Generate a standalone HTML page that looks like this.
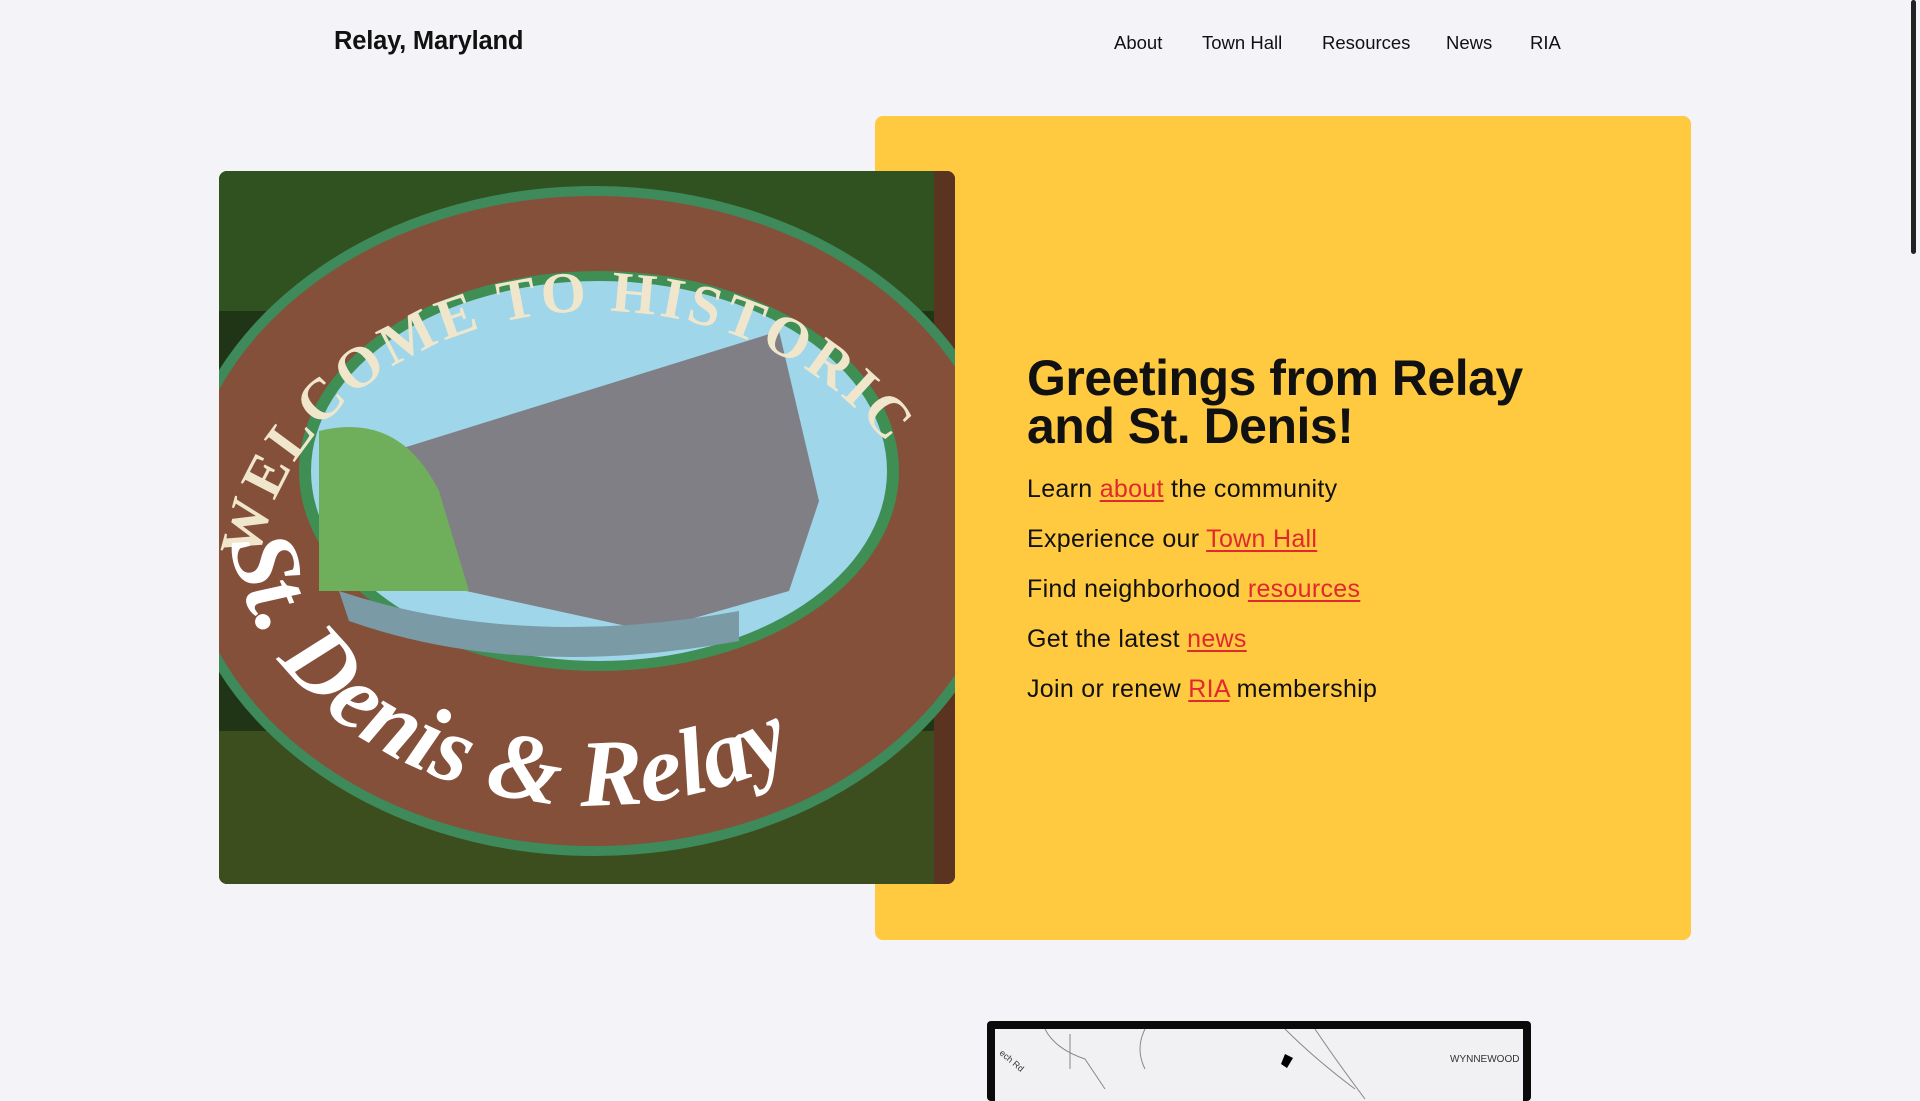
<!DOCTYPE html>
<html><head><meta charset="utf-8"><style>
html,body{margin:0;padding:0}
body{width:1920px;height:1080px;overflow:hidden;background:#f4f3f8;font-family:"Liberation Sans",sans-serif;color:#111;position:relative}
.logo{position:absolute;left:334px;top:27px;font-size:25.5px;font-weight:bold;letter-spacing:-0.2px}
.nav a{position:absolute;top:32px;font-size:18.5px;color:#111;text-decoration:none}
.yellow{position:absolute;left:875px;top:116px;width:816px;height:824px;background:#ffc940;border-radius:8px}
.img{position:absolute;left:219px;top:171px;width:736px;height:713px;border-radius:8px;overflow:hidden}
h1{position:absolute;left:1027px;top:354px;margin:0;font-size:50px;line-height:48px;font-weight:bold;letter-spacing:-0.5px}
.l{position:absolute;left:1027px;font-size:25px;line-height:30px;color:#111;letter-spacing:0.3px}
.l a{color:#e0282f;text-decoration:underline;text-underline-offset:3px}
.map{position:absolute;left:987px;top:1021px;width:544px;height:80px;background:#0a0a0a;border-radius:4px}
.map .in{position:absolute;left:8px;top:8px;right:8px;bottom:0;background:#f1f1f3;overflow:hidden}
.sb{position:absolute;left:1911px;top:0;width:5px;height:254px;background:#222;border-radius:3px}
</style></head><body>
<div class="logo">Relay, Maryland</div>
<div class="nav">
<a style="left:1114px">About</a><a style="left:1202px">Town Hall</a><a style="left:1322px">Resources</a><a style="left:1446px">News</a><a style="left:1530px">RIA</a>
</div>
<div class="yellow"></div>
<div class="img">
<svg width="736" height="713" viewBox="0 0 736 713">
<defs>
<path id="top" d="M40 390 A340 280 0 0 1 700 330"/>
<path id="bot" d="M10 350 A360 290 0 0 0 740 330"/>
</defs>
<rect width="736" height="713" fill="#1f3516"/>
<rect x="0" y="0" width="736" height="140" fill="#2f5220"/>
<rect x="0" y="560" width="736" height="153" fill="#3c4d1e"/>
<rect x="715" y="0" width="21" height="713" fill="#5a3420"/>
<ellipse cx="375" cy="350" rx="415" ry="330" fill="#84503a"/>
<ellipse cx="375" cy="350" rx="415" ry="330" fill="none" stroke="#3e8a5a" stroke-width="10"/>
<ellipse cx="380" cy="300" rx="300" ry="200" fill="#3f8f55"/>
<ellipse cx="380" cy="300" rx="288" ry="190" fill="#9fd6ea"/>
<path d="M110 300 L560 160 L600 330 L570 420 L430 460 L110 390Z" fill="#807f85"/>
<path d="M100 260 Q180 240 220 320 L250 420 L100 420Z" fill="#6fae5a"/>
<path d="M120 420 Q300 480 520 440 L520 470 Q300 510 130 450Z" fill="#7a9aa5"/>
<text font-family="Liberation Serif" font-size="58" font-weight="bold" fill="#f0e6cc" letter-spacing="4"><textPath href="#top">WELCOME TO HISTORIC</textPath></text>
<text font-family="Liberation Serif" font-style="italic" font-size="95" font-weight="bold" fill="#fff"><textPath href="#bot" startOffset="2%">St. Denis &amp; Relay</textPath></text>
</svg>
</div>
<h1>Greetings from Relay<br>and St. Denis!</h1>
<div class="l" style="top:474px">Learn <a>about</a> the community</div>
<div class="l" style="top:524px">Experience our <a>Town Hall</a></div>
<div class="l" style="top:574px">Find neighborhood <a>resources</a></div>
<div class="l" style="top:624px">Get the latest <a>news</a></div>
<div class="l" style="top:674px">Join or renew <a>RIA</a> membership</div>
<div class="map"><div class="in">
<svg width="528" height="80"><path d="M50 0 Q60 20 90 30 L110 60 M75 5 L75 40 M150 0 Q140 20 150 40 M290 0 Q320 30 360 60 M320 0 Q340 30 370 70" stroke="#888" fill="none"/><path d="M290 25 l8 4 -6 10 -6-4z" fill="#000"/>
<text x="455" y="33" font-size="10" fill="#333" font-family="Liberation Sans">WYNNEWOOD</text>
<text x="2" y="30" font-size="9" fill="#333" transform="rotate(40 10 30)">ech Rd</text></svg>
</div></div>
<div class="sb"></div>
</body></html>
